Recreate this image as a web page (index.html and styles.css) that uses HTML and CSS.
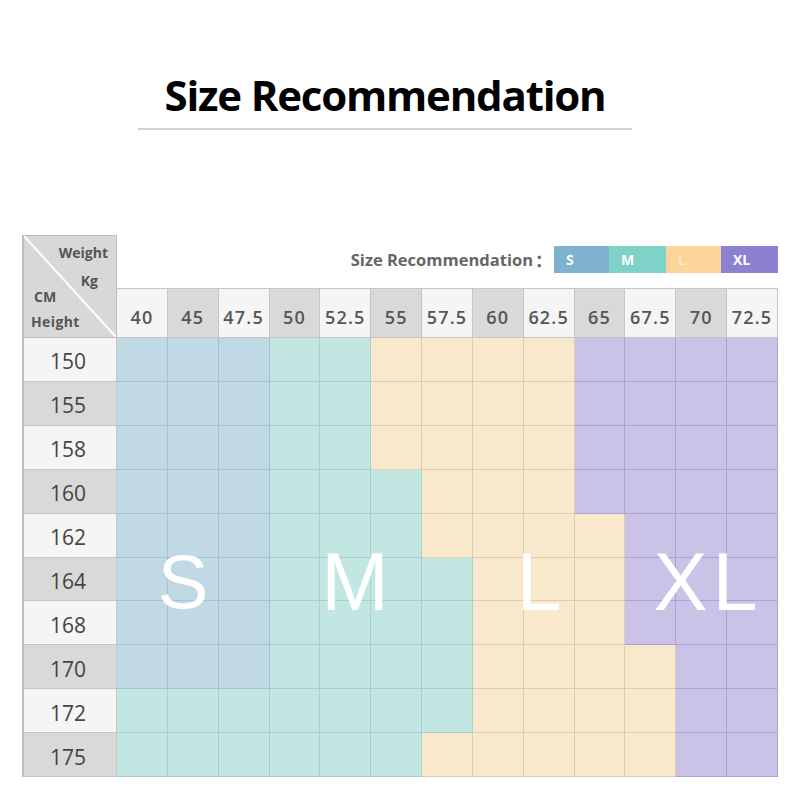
FILE: index.html
```html
<!DOCTYPE html>
<html>
<head>
<meta charset="utf-8">
<link rel="stylesheet" href="styles.css">
</head>
<body>
<div class="page">
  <header class="heading">
    <h1 class="title">Size Recommendation</h1>
    <div class="rule"></div>
  </header>

  <div class="chart">
    <div class="corner">
      <span class="c-weight">Weight</span>
      <span class="c-kg">Kg</span>
      <span class="c-cm">CM</span>
      <span class="c-height">Height</span>
    </div>
    <div class="legend">
      <span class="legend-label">Size Recommendation</span>
      <span class="legend-colon">：</span>
      <div class="swatches">
        <span class="sw sw-s">S</span>
        <span class="sw sw-m">M</span>
        <span class="sw sw-l">L</span>
        <span class="sw sw-xl">XL</span>
      </div>
    </div>

    <div class="wh lt">40</div><div class="wh dk">45</div><div class="wh lt">47.5</div><div class="wh dk">50</div><div class="wh lt">52.5</div><div class="wh dk">55</div><div class="wh lt">57.5</div><div class="wh dk">60</div><div class="wh lt">62.5</div><div class="wh dk">65</div><div class="wh lt">67.5</div><div class="wh dk">70</div><div class="wh lt">72.5</div>

    <div class="hh lt">150</div>
    <div class="c s"></div><div class="c s"></div><div class="c s"></div><div class="c m"></div><div class="c m"></div><div class="c l"></div><div class="c l"></div><div class="c l"></div><div class="c l"></div><div class="c xl"></div><div class="c xl"></div><div class="c xl"></div><div class="c xl"></div>

    <div class="hh dk">155</div>
    <div class="c s"></div><div class="c s"></div><div class="c s"></div><div class="c m"></div><div class="c m"></div><div class="c l"></div><div class="c l"></div><div class="c l"></div><div class="c l"></div><div class="c xl"></div><div class="c xl"></div><div class="c xl"></div><div class="c xl"></div>

    <div class="hh lt">158</div>
    <div class="c s"></div><div class="c s"></div><div class="c s"></div><div class="c m"></div><div class="c m"></div><div class="c l"></div><div class="c l"></div><div class="c l"></div><div class="c l"></div><div class="c xl"></div><div class="c xl"></div><div class="c xl"></div><div class="c xl"></div>

    <div class="hh dk">160</div>
    <div class="c s"></div><div class="c s"></div><div class="c s"></div><div class="c m"></div><div class="c m"></div><div class="c m"></div><div class="c l"></div><div class="c l"></div><div class="c l"></div><div class="c xl"></div><div class="c xl"></div><div class="c xl"></div><div class="c xl"></div>

    <div class="hh lt">162</div>
    <div class="c s"></div><div class="c s"></div><div class="c s"></div><div class="c m"></div><div class="c m"></div><div class="c m"></div><div class="c l"></div><div class="c l"></div><div class="c l"></div><div class="c l"></div><div class="c xl"></div><div class="c xl"></div><div class="c xl"></div>

    <div class="hh dk">164</div>
    <div class="c s"></div><div class="c s"></div><div class="c s"></div><div class="c m"></div><div class="c m"></div><div class="c m"></div><div class="c m"></div><div class="c l"></div><div class="c l"></div><div class="c l"></div><div class="c xl"></div><div class="c xl"></div><div class="c xl"></div>

    <div class="hh lt">168</div>
    <div class="c s"></div><div class="c s"></div><div class="c s"></div><div class="c m"></div><div class="c m"></div><div class="c m"></div><div class="c m"></div><div class="c l"></div><div class="c l"></div><div class="c l"></div><div class="c xl"></div><div class="c xl"></div><div class="c xl"></div>

    <div class="hh dk">170</div>
    <div class="c s"></div><div class="c s"></div><div class="c s"></div><div class="c m"></div><div class="c m"></div><div class="c m"></div><div class="c m"></div><div class="c l"></div><div class="c l"></div><div class="c l"></div><div class="c l"></div><div class="c xl"></div><div class="c xl"></div>

    <div class="hh lt">172</div>
    <div class="c m"></div><div class="c m"></div><div class="c m"></div><div class="c m"></div><div class="c m"></div><div class="c m"></div><div class="c m"></div><div class="c l"></div><div class="c l"></div><div class="c l"></div><div class="c l"></div><div class="c xl"></div><div class="c xl"></div>

    <div class="hh dk">175</div>
    <div class="c m"></div><div class="c m"></div><div class="c m"></div><div class="c m"></div><div class="c m"></div><div class="c m"></div><div class="c l"></div><div class="c l"></div><div class="c l"></div><div class="c l"></div><div class="c l"></div><div class="c xl"></div><div class="c xl"></div>

    <span class="big big-s">S</span>
    <span class="big big-m">M</span>
    <span class="big big-l">L</span>
    <span class="big big-xl">XL</span>
  </div>
</div>
</body>
</html>
```

FILE: styles.css
```css
* { box-sizing: border-box; }

html, body {
  margin: 0;
  padding: 0;
  background: #ffffff;
}

.page {
  width: 800px;
  height: 800px;
  overflow: hidden;
  font-family: "Open Sans", "Noto Sans", sans-serif;
}

.heading {
  margin-left: 138px;
  width: 494px;
  padding-top: 66px;
}

.title {
  margin: 0;
  font-size: 42px;
  line-height: 57px;
  font-weight: 700;
  letter-spacing: -1.2px;
  color: #000;
  text-align: center;
}

.rule {
  margin-top: 5px;
  height: 2px;
  background: #d4d4d4;
}

.chart {
  position: relative;
  margin-top: 105px;
  margin-left: 22px;
  width: 756px;
  height: 542px;
  display: grid;
  grid-template-columns: 95px repeat(13, 1fr);
  grid-template-rows: 53px 50px repeat(10, 1fr);
}

.corner {
  grid-column: 1;
  grid-row: 1 / 3;
  border: 1px solid #bdbdbd;
  border-width: 1px 1px 1px 2px;
  background: linear-gradient(to top right, #d8d8d8 calc(50% - 1.5px), #ffffff calc(50% - 0.5px), #ffffff calc(50% + 0.5px), #d8d8d8 calc(50% + 1.5px));
  display: flex;
  flex-direction: column;
  font-size: 14px;
  font-weight: 700;
  color: #555;
  line-height: 20px;
  padding-top: 7px;
}

.c-weight { align-self: flex-end; margin-right: 8px; }
.c-kg { align-self: flex-end; margin-right: 18px; margin-top: 8px; }
.c-cm { align-self: flex-start; margin-left: 10px; margin-top: -4px; }
.c-height { align-self: flex-start; margin-left: 7px; margin-top: 5px; letter-spacing: 0.4px; }

.legend {
  grid-column: 2 / 15;
  grid-row: 1;
  display: flex;
  justify-content: flex-end;
  align-items: center;
  padding-bottom: 4px;
}

.legend-label {
  font-size: 16.5px;
  font-weight: 700;
  color: #666;
}

.legend-colon {
  font-family: "Noto Sans CJK SC", sans-serif;
  font-size: 17px;
  font-weight: 700;
  color: #666;
  margin-left: 2px;
  margin-right: 2px;
}

.swatches {
  display: flex;
  height: 27px;
}

.sw {
  display: flex;
  align-items: center;
  padding-left: 12px;
  font-size: 14px;
  font-weight: 700;
  color: #ffffff;
  height: 27px;
}

.sw-s { width: 55px; background: #7fb2cf; }
.sw-m { width: 57px; background: #7fd2c7; }
.sw-l { width: 55px; background: #fdd59b; color: #fbe8cc; }
.sw-xl { width: 57px; background: #8e80d0; }

.wh {
  border-top: 1px solid #c6c6c6;
  border-right: 1px solid #c6c6c6;
  border-bottom: 1px solid #c6c6c6;
  display: flex;
  align-items: center;
  justify-content: center;
  padding-top: 8px;
  font-size: 18px;
  font-weight: 600;
  letter-spacing: 1.2px;
  color: #555;
}

.wh:last-of-type { border-right-color: #bdbdbd; }

.hh {
  border-left: 2px solid #bdbdbd;
  border-right: 1px solid #c6c6c6;
  border-bottom: 1px solid #c6c6c6;
  display: flex;
  align-items: center;
  justify-content: center;
  padding-top: 4px;
  padding-right: 4px;
  font-size: 21px;
  font-weight: 400;
  color: #444;
}

.lt { background: #f5f5f5; }
.dk { background: #d9d9d9; }

.c {
  border-right: 1px solid;
  border-bottom: 1px solid;
}

.s { background: #c1d9e4; border-color: #a4c3d1; }
.m { background: #c2e6e2; border-color: #a5d0cb; }
.l { background: #f8e8cc; border-color: #ddcdb0; }
.xl { background: #cac2e7; border-color: #aca3d4; }

.big {
  position: absolute;
  font-family: "Liberation Sans", Arial, sans-serif;
  font-size: 81px;
  line-height: 80px;
  color: #ffffff;
  width: 140px;
  text-align: center;
  top: 307px;
}

.big-s { left: 91px; font-size: 76px; }
.big-m { left: 263px; }
.big-l { left: 447px; }
.big-xl { left: 616px; letter-spacing: 5px; }
```
